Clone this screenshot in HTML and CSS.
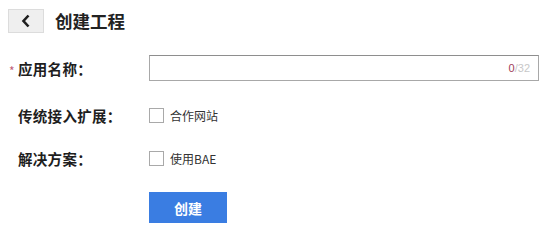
FILE: index.html
```html
<!DOCTYPE html>
<html lang="zh">
<head>
<meta charset="utf-8">
<title>创建工程</title>
<link rel="stylesheet" href="styles.css">
</head>
<body>
<div class="header">
  <button class="back" type="button" aria-label="返回">
    <svg width="12" height="14" viewBox="0 0 12 14"><path d="M8.5 1.5 L3.5 7 L8.5 12.5" fill="none" stroke="#1e1e1e" stroke-width="2.6"/></svg>
  </button>
  <h1 class="title">创建工程</h1>
</div>
<div class="form">
  <div class="row row-name">
    <label class="label"><span class="req">*</span>应用名称：</label>
    <div class="input">
      <span class="count"><span class="cur">0</span>/32</span>
    </div>
  </div>
  <div class="row row-ext">
    <label class="label">传统接入扩展：</label>
    <span class="check"><span class="box"></span>合作网站</span>
  </div>
  <div class="row row-sol">
    <label class="label">解决方案：</label>
    <span class="check"><span class="box"></span>使用BAE</span>
  </div>
  <div class="row row-btn">
    <span class="label"></span>
    <button class="submit" type="button">创建</button>
  </div>
</div>
</body>
</html>
```
FILE: styles.css
```css
body {
  margin: 0;
  background: #fff;
  font-family: "Noto Sans CJK SC", "Liberation Sans", sans-serif;
  color: #333;
}
.header {
  display: flex;
  align-items: center;
  padding: 9px 8px 0;
  gap: 11px;
  height: 24px;
}
.back {
  width: 36px;
  height: 24px;
  margin: 0;
  padding: 0;
  background: #efefef;
  border: 1px solid #dcdcdc;
  display: flex;
  align-items: center;
  justify-content: center;
}
.title {
  margin: 0;
  font-size: 17.5px;
  font-weight: bold;
  color: #222;
  line-height: 24px;
}
.form {
  margin-top: 22px;
}
.row {
  display: flex;
  align-items: center;
  height: 26px;
}
.row-ext { margin-top: 21px; }
.row-sol { margin-top: 17px; }
.row-btn { margin-top: 21px; height: 31px; }
.label {
  position: relative;
  width: 131px;
  padding-left: 18px;
  flex: none;
  font-size: 14.5px;
  font-weight: bold;
  color: #1e1e1e;
  letter-spacing: 0.3px;
}
.req {
  position: absolute;
  left: 9px;
  top: 4px;
  color: #c0607a;
  font-weight: normal;
  font-size: 12px;
}
.input {
  height: 24px;
  border: 1px solid #a8a8a8;
  border-top-color: #8e8e8e;
  display: flex;
  align-items: center;
  justify-content: flex-end;
  padding-right: 8px;
  box-sizing: content-box;
  width: 380px;
}
.count {
  font-family: "Liberation Sans", sans-serif;
  font-size: 11px;
  color: #c8c8c8;
}
.cur { color: #a0405a; }
.check {
  display: flex;
  align-items: center;
  font-size: 12px;
  color: #333;
}
.box {
  width: 13px;
  height: 13px;
  border: 1px solid #a9a9a9;
  background: #fff;
  margin-right: 6px;
}
.submit {
  width: 78px;
  height: 31px;
  margin: 0;
  border: none;
  background: #3a7de2;
  color: #fff;
  font-family: "Noto Sans CJK SC", sans-serif;
  font-size: 14px;
  font-weight: bold;
}
```
